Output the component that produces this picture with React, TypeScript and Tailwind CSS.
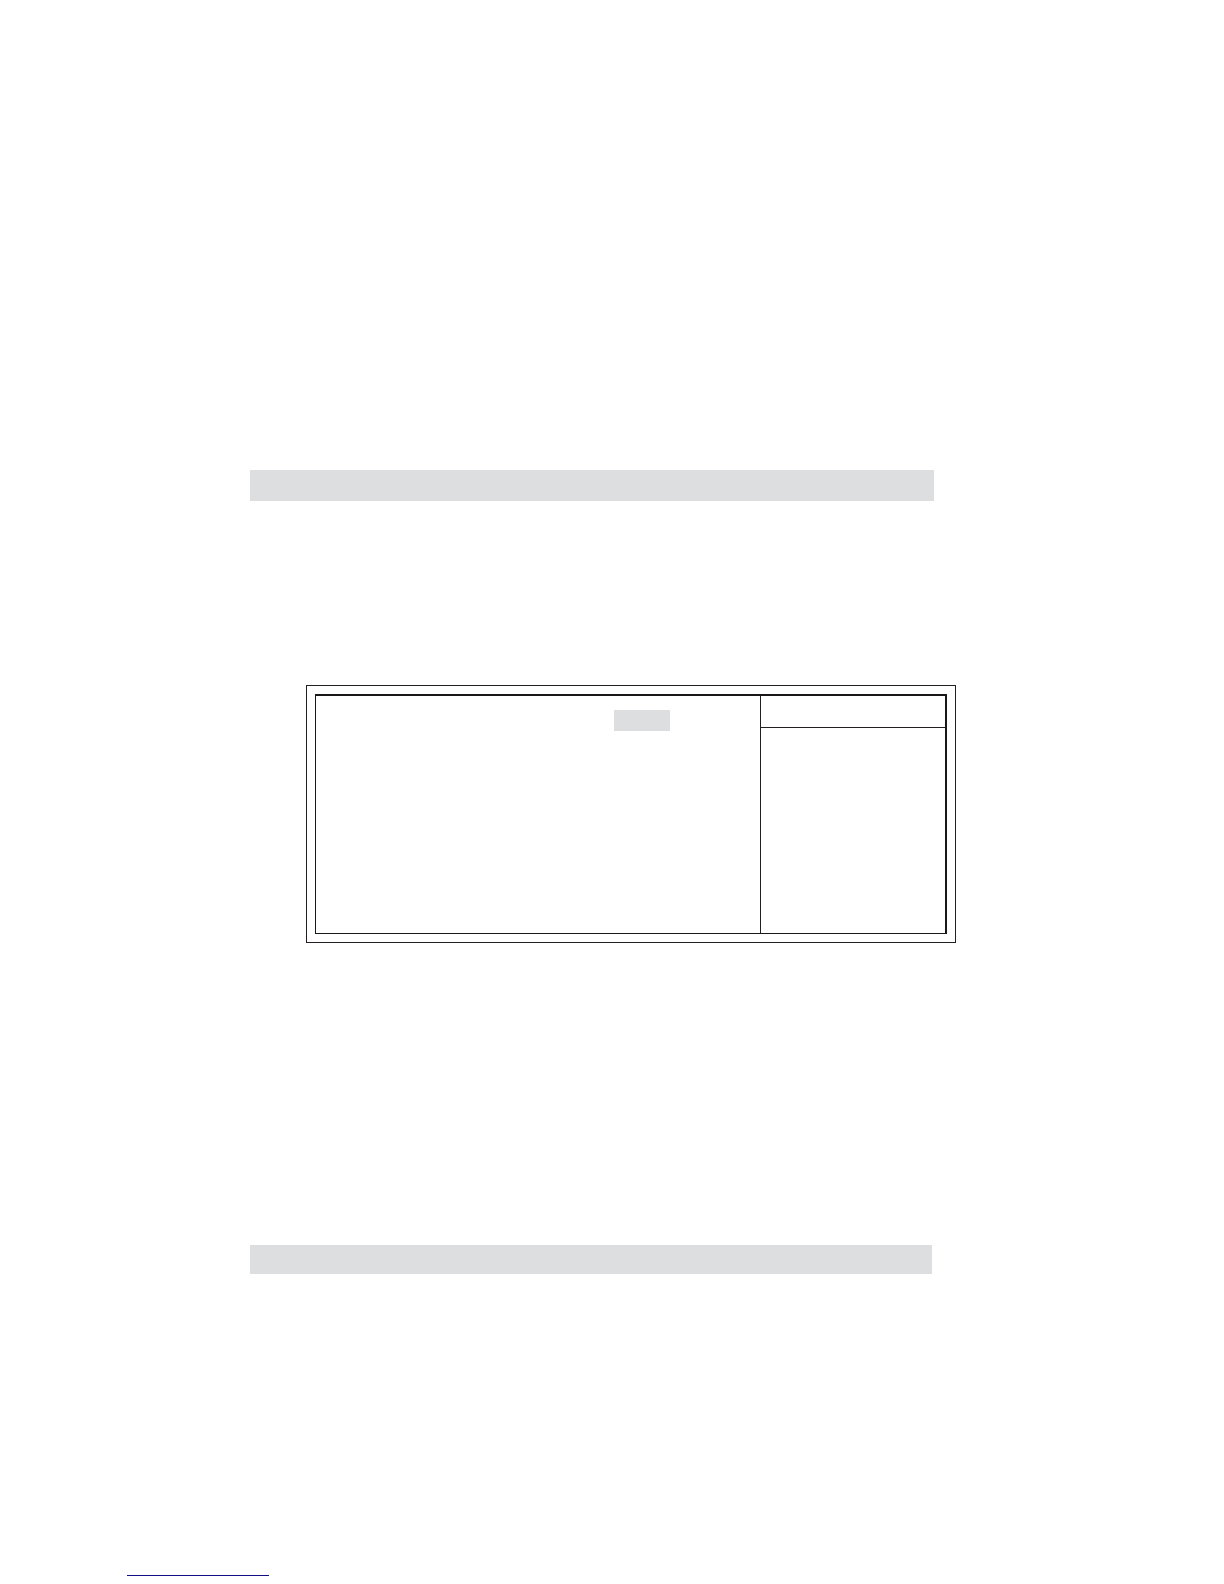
import clsx from "clsx";

interface BarProps {
  className?: string;
}

function HeadingBar({ className }: BarProps) {
  return <div className={clsx("bg-[#dcdedf]", className)} />;
}

function SetupScreen() {
  return (
    <section className="mt-[184px] ml-[306px] mr-[268px] border border-[#231f20] p-2">
      <div className="flex min-h-60 border-t-2 border-r-2 border-b border-l border-[#1a1718]">
        {/* Settings, with the selected value highlighted */}
        <div className="flex flex-1 items-start justify-end pt-3.5 pr-[90px]">
          <div className="h-[21px] w-14 bg-[#dcdedf]" />
        </div>

        {/* Item help */}
        <aside className="w-[185px] border-l border-[#231f20]">
          <div className="h-8 border-b border-[#231f20]" />
        </aside>
      </div>
    </section>
  );
}

export default function App() {
  return (
    <main className="min-h-screen bg-white pt-[470px] pb-2 font-['Liberation_Sans',sans-serif]">
      <HeadingBar className="ml-[250px] mr-[290px] h-[31px]" />
      <SetupScreen />
      <HeadingBar className="mt-[302px] ml-[250px] mr-[292px] h-[29px]" />
      <div className="mt-[301px] ml-[127px] h-px w-[142px] bg-[#120f86]" />
    </main>
  );
}
